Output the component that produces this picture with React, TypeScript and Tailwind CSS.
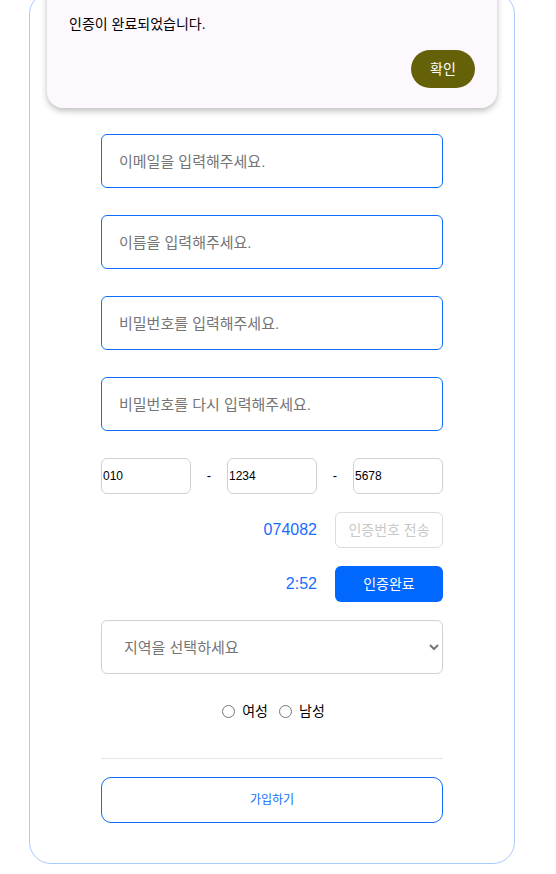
import React from "react";

export default function App() {
  const font = { fontFamily: '"Liberation Sans", "Noto Sans CJK KR", sans-serif' };
  return (
    <div className="relative w-[556px] h-[874px] overflow-hidden bg-white" style={font}>
      <div className="ml-[29px] mt-[-8px] w-[486px] border border-[#a9cbfb] rounded-[22px] pt-[141px] pb-[40px] flex flex-col items-center">
        <div className="w-[342px] flex flex-col gap-[27px]">
          <input className="h-[54px] border border-[#0d6efd] rounded-[6px] px-[17px] text-[15px] outline-none placeholder:text-[#757575]" placeholder="이메일을 입력해주세요." />
          <input className="h-[54px] border border-[#0d6efd] rounded-[6px] px-[17px] text-[15px] outline-none placeholder:text-[#757575]" placeholder="이름을 입력해주세요." />
          <input type="password" className="h-[54px] border border-[#0d6efd] rounded-[6px] px-[17px] text-[15px] outline-none placeholder:text-[#757575]" placeholder="비밀번호를 입력해주세요." />
          <input type="password" className="h-[54px] border border-[#0d6efd] rounded-[6px] px-[17px] text-[15px] outline-none placeholder:text-[#757575]" placeholder="비밀번호를 다시 입력해주세요." />
        </div>
        <div className="w-[342px] mt-[27px] flex items-center justify-between">
          <input defaultValue="010" className="w-[90px] h-[36px] border border-[#d0d0d0] rounded-[6px] px-[1px] text-[12px] text-black outline-none" />
          <span className="text-[13px] text-black">-</span>
          <input defaultValue="1234" className="w-[90px] h-[36px] border border-[#d0d0d0] rounded-[6px] px-[1px] text-[12px] text-black outline-none" />
          <span className="text-[13px] text-black">-</span>
          <input defaultValue="5678" className="w-[90px] h-[36px] border border-[#d0d0d0] rounded-[6px] px-[1px] text-[12px] text-black outline-none" />
        </div>
        <div className="w-[342px] mt-[18px] flex items-center justify-end gap-[18px]">
          <span className="text-[16px] text-[#1a6cff]">074082</span>
          <button disabled className="w-[108px] h-[36px] border border-[#dcdcdc] rounded-[6px] text-[14px] text-[#c8c8c8] bg-white">인증번호 전송</button>
        </div>
        <div className="w-[342px] mt-[18px] flex items-center justify-end gap-[18px]">
          <span className="text-[16px] text-[#1a6cff]">2:52</span>
          <button className="w-[108px] h-[36px] rounded-[6px] text-[14px] text-white bg-[#0068ff]">인증완료</button>
        </div>
        <select defaultValue="" className="mt-[18px] w-[342px] h-[54px] border border-[#d0d0d0] rounded-[6px] pl-[18px] pr-[6px] text-[15px] text-[#757575] bg-white outline-none">
          <option value="" disabled>지역을 선택하세요</option>
          <option>서울</option>
        </select>
        <div className="mt-[27px] flex items-center justify-center gap-[4px] text-[14px] text-black">
          <input type="radio" name="g" className="w-[13px] h-[13px] mx-[3px]" />
          <span>여성</span>
          <input type="radio" name="g" className="w-[13px] h-[13px] mx-[3px] ml-[7px]" />
          <span>남성</span>
        </div>
        <div className="w-[342px] mt-[36px] h-px bg-[#e5e5e5]" />
        <button className="mt-[18px] w-[342px] h-[46px] border border-[#0d6efd] rounded-[10px] text-[12px] text-[#0d6efd] bg-white">가입하기</button>
      </div>

      <div className="absolute left-[47px] top-[-52px] w-[450px] h-[160px] bg-[#fdf8fd] rounded-[16px] shadow-[0_3px_6px_rgba(0,0,0,0.25)] px-[22px] pt-[14px]">
        <div className="text-[18px] text-black font-medium">인증 완료 안내</div>
        <div className="mt-[25px] text-[14px] text-black">인증이 완료되었습니다.</div>
        <div className="mt-[15px] flex justify-end">
          <button className="w-[64px] h-[38px] rounded-full bg-[#646108] text-white text-[14px]">확인</button>
        </div>
      </div>
    </div>
  );
}
